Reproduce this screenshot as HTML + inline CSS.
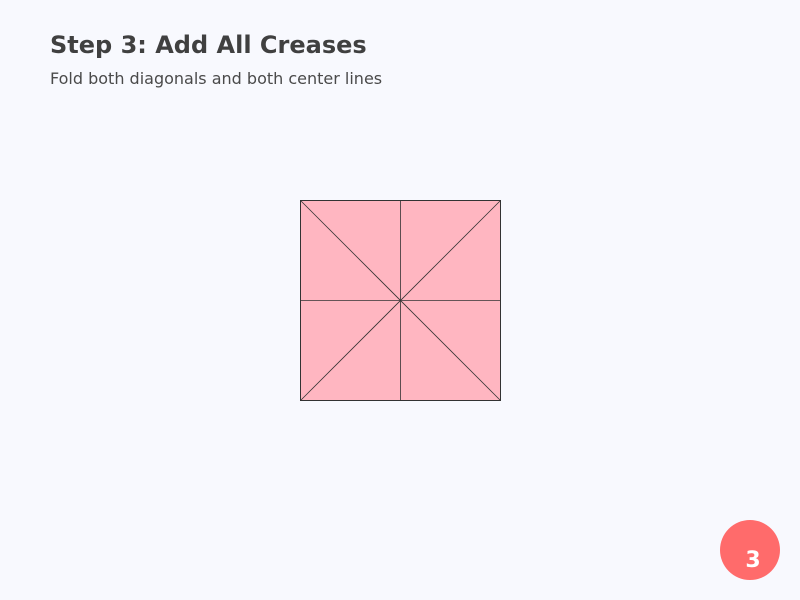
<!DOCTYPE html>
<html><head><style>html,body{margin:0;padding:0;background:#f8f9fe;}</style></head>
<body>
<svg width="800" height="600" xmlns="http://www.w3.org/2000/svg" style="display:block">
<rect width="800" height="600" fill="#f8f9fe"/>
<text x="50" y="53" font-family="DejaVu Sans, sans-serif" font-weight="bold" font-size="24" fill="#404040">Step 3: Add All Creases</text>
<text x="50" y="84" font-family="DejaVu Sans, sans-serif" font-size="16" fill="#4a4a4a">Fold both diagonals and both center lines</text>
<rect x="300.5" y="200.5" width="200" height="200" fill="#ffb6c1" stroke="#333" stroke-width="1"/>
<g stroke="#333" stroke-width="0.8">
<line x1="300.5" y1="200.5" x2="500.5" y2="400.5"/>
<line x1="500.5" y1="200.5" x2="300.5" y2="400.5"/>
<line x1="400.5" y1="200.5" x2="400.5" y2="400.5"/>
<line x1="300.5" y1="300.5" x2="500.5" y2="300.5"/>
</g>
<circle cx="750" cy="550" r="30" fill="#ff6b6b"/>
<text x="753" y="567" text-anchor="middle" font-family="DejaVu Sans, sans-serif" font-weight="bold" font-size="22" fill="#fff">3</text>
</svg>
</body></html>
